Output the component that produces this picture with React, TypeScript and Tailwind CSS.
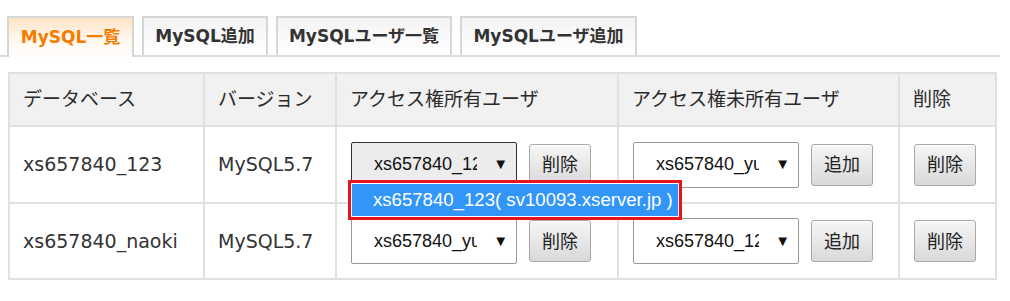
import { useState } from 'react';

const tabs = [
  { label: 'MySQL一覧', w: 'w-[127px]' },
  { label: 'MySQL追加', w: 'w-[126px]' },
  { label: 'MySQLユーザ一覧', w: 'w-[176px]' },
  { label: 'MySQLユーザ追加', w: 'w-[177px]' },
];

const rows = [
  { db: 'xs657840_123', ver: 'MySQL5.7', owner: 'xs657840_123', other: 'xs657840_yu', open: true },
  { db: 'xs657840_naoki', ver: 'MySQL5.7', owner: 'xs657840_yu', other: 'xs657840_123', open: false },
];

const font = "font-['DejaVu_Sans','Noto_Sans_CJK_JP',sans-serif]";
const arial = "font-['Liberation_Sans','Noto_Sans_CJK_JP',sans-serif]";

function Button({ label }: { label: string }) {
  return (
    <button className="h-[42px] w-[62px] shrink-0 rounded-[3px] border border-[#a9a9a9] bg-gradient-to-b from-[#f6f6f6] to-[#d9d9d9] text-[18px] text-[#222] shadow-[inset_0_1px_0_#fff]">
      {label}
    </button>
  );
}

function Select({ value, active }: { value: string; active?: boolean }) {
  return (
    <div
      className={
        active
          ? `flex h-[46px] w-[166px] shrink-0 items-center rounded-[2px] border border-[#333] bg-[#ececec] pl-[22px] pr-[8px] ${arial}`
          : `flex h-[46px] w-[166px] shrink-0 items-center rounded-[2px] border border-[#999] bg-white pl-[22px] pr-[8px] ${arial}`
      }
    >
      <span className="w-[103px] overflow-hidden whitespace-nowrap text-[18px] text-[#111]">{value}</span>
      <span className="ml-auto text-[15px] text-[#111]">▼</span>
    </div>
  );
}

export default function App() {
  const [active, setActive] = useState(0);

  return (
    <div className={`relative h-[301px] w-[1010px] bg-white pt-[16px] text-[#333] ${font}`}>
      {/* Tabs */}
      <div className="flex h-[41px] w-[1000px] items-end gap-[8px] border-b-2 border-[#dcdcdc] pl-[7px]">
        {tabs.map((t, i) => (
          <button
            key={t.label}
            onClick={() => setActive(i)}
            className={
              i === active
                ? `-mb-[2px] flex h-[41px] ${t.w} items-center justify-center border-2 border-b-0 border-[#d6d6d6] bg-gradient-to-b from-[#ffe3c4] via-[#fff6ec] to-white text-[17px] font-bold text-[#f57c00]`
                : `flex h-[39px] ${t.w} items-center justify-center border-2 border-b-0 border-[#d6d6d6] bg-gradient-to-b from-[#f3f3f3] to-white text-[17px] font-bold text-[#333]`
            }
          >
            {t.label}
          </button>
        ))}
      </div>

      {/* Table */}
      <table className="ml-[8px] mt-[15px] w-[987px] table-fixed border-collapse text-[19px]">
        <colgroup>
          <col className="w-[195px]" />
          <col className="w-[132px]" />
          <col className="w-[282px]" />
          <col className="w-[281px]" />
          <col className="w-[97px]" />
        </colgroup>
        <thead>
          <tr className="h-[53px] bg-[#f1f1f1]">
            {['データベース', 'バージョン', 'アクセス権所有ユーザ', 'アクセス権未所有ユーザ', '削除'].map((h) => (
              <th key={h} className="border-2 border-[#e0e0e0] pl-[13px] text-left font-normal text-[#2b2b2b]">
                {h}
              </th>
            ))}
          </tr>
        </thead>
        <tbody>
          {rows.map((r, idx) => (
            <tr key={r.db} className={idx === 0 ? 'h-[77px]' : 'h-[76px]'}>
              <td className="border-2 border-[#e0e0e0] pl-[13px]">{r.db}</td>
              <td className="border-2 border-[#e0e0e0] pl-[13px]">{r.ver}</td>
              <td className="border-2 border-[#e0e0e0] pl-[14px]">
                <div className="flex items-center gap-[12px]">
                  <Select value={r.owner} active={r.open} />
                  <Button label="削除" />
                </div>
              </td>
              <td className="border-2 border-[#e0e0e0] pl-[14px]">
                <div className="flex items-center gap-[12px]">
                  <Select value={r.other} />
                  <Button label="追加" />
                </div>
              </td>
              <td className="border-2 border-[#e0e0e0] pl-[14px]">
                <Button label="削除" />
              </td>
            </tr>
          ))}
        </tbody>
      </table>

      {/* Open dropdown of the first select */}
      <div className="absolute left-[348px] top-[180px] w-[334px] border-[3px] border-[#e8131c] bg-white p-[1px]">
        <div className={`h-[32px] whitespace-nowrap bg-[#3296f8] pl-[21px] text-[18.6px] leading-[32px] text-white ${arial}`}>
          xs657840_123( sv10093.xserver.jp )
        </div>
      </div>
    </div>
  );
}
